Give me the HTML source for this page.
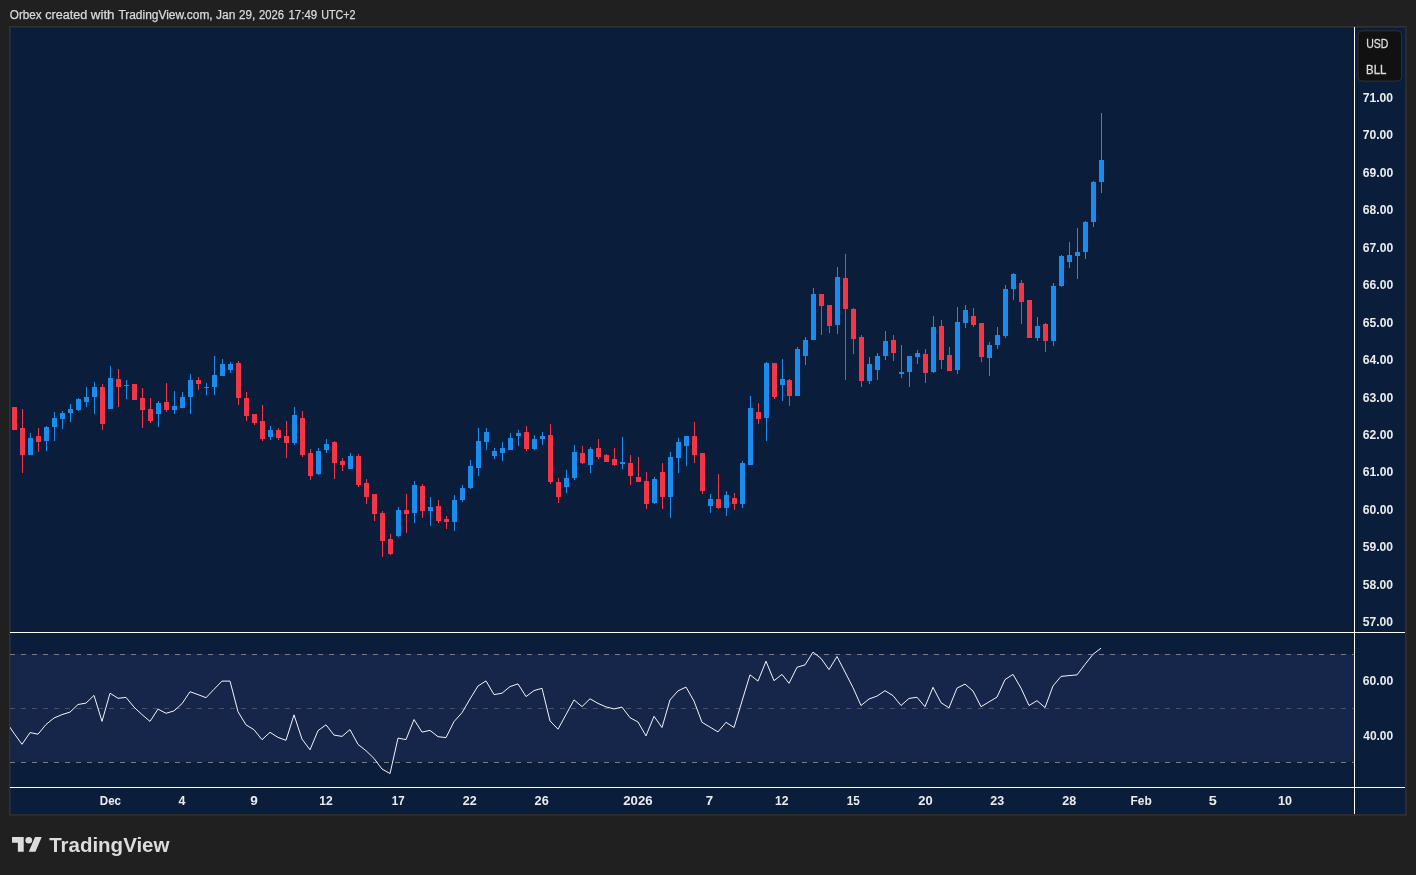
<!DOCTYPE html>
<html lang="en"><head><meta charset="utf-8"><title>BLL chart</title>
<style>html,body{margin:0;padding:0;background:#202020;overflow:hidden}svg{display:block;will-change:transform}text{font-family:"Liberation Sans",sans-serif}.hd{font-size:12px;fill:#dadada;stroke:#dadada;stroke-width:0.25px}.ax{font-size:12px;font-weight:bold;fill:#ececec}.cur{font-size:12px;fill:#dcdcdc;stroke:#dcdcdc;stroke-width:0.3px}.logo{font-size:20.5px;font-weight:bold;fill:#dcdcdc}</style></head><body>
<svg width="1416" height="875" viewBox="0 0 1416 875">
<rect width="1416" height="875" fill="#202020"/>
<rect x="9" y="26" width="1398" height="790" fill="#2c2c2c"/><rect x="9" y="26" width="1396" height="1" fill="#323232"/><rect x="9" y="26" width="1" height="788" fill="#323232"/>
<rect x="10" y="27" width="1395" height="787" fill="#0A1E3C"/>
<rect x="10" y="27" width="1395" height="1" fill="#1a2a42"/>
<rect x="10" y="654" width="1344" height="108" fill="#16254A"/>
<rect x="10" y="27" width="1" height="787" fill="#1a2a42"/>
<line x1="10" x2="1354" y1="654.5" y2="654.5" stroke="#787B86" stroke-opacity="1" stroke-width="1" stroke-dasharray="5 6" shape-rendering="crispEdges"/>
<line x1="10" x2="1354" y1="708.5" y2="708.5" stroke="#787B86" stroke-opacity="0.5" stroke-width="1" stroke-dasharray="5 6" shape-rendering="crispEdges"/>
<line x1="10" x2="1354" y1="762.5" y2="762.5" stroke="#787B86" stroke-opacity="1" stroke-width="1" stroke-dasharray="5 6" shape-rendering="crispEdges"/>
<defs><linearGradient id="gr" gradientUnits="userSpaceOnUse" x1="0" y1="762.5" x2="0" y2="787"><stop offset="0" stop-color="#ff3346" stop-opacity="0"/><stop offset="1" stop-color="#ff3346" stop-opacity="0.18"/></linearGradient><linearGradient id="gg" gradientUnits="userSpaceOnUse" x1="0" y1="654.5" x2="0" y2="633"><stop offset="0" stop-color="#4caf50" stop-opacity="0"/><stop offset="1" stop-color="#4caf50" stop-opacity="0.12"/></linearGradient><clipPath id="cl"><rect x="10" y="762.5" width="1344" height="24.5"/></clipPath><clipPath id="ch"><rect x="10" y="633" width="1344" height="21.5"/></clipPath></defs>
<path clip-path="url(#cl)" fill="url(#gr)" d="M6,762.5 L6,721.5 L14,733.3 L22,744.3 L30,732.6 L38,734.2 L46,724.5 L54,718 L62,714.6 L70,712.1 L78,704.5 L86,703.1 L94,695.4 L102,721.4 L110,693.2 L118,698.3 L126,697.4 L134,707.1 L142,714.6 L150,721.4 L158,709.1 L166,713.3 L174,710.9 L182,703.7 L190,691.7 L198,694.6 L206,697.7 L214,689.3 L222,681.1 L230,681.1 L238,711.7 L246,724.9 L254,729.7 L262,739.7 L270,732.3 L278,737.4 L286,740.3 L294,714.9 L302,739.1 L310,749.8 L318,730.7 L326,724.8 L334,735.1 L342,736.4 L350,729.6 L358,744.4 L366,750.7 L374,758.4 L382,769 L390,773.6 L398,738.1 L406,739.6 L414,719.5 L422,732.1 L430,730.4 L438,736.7 L446,737.6 L454,721.6 L462,712.7 L470,699 L478,686 L486,680.9 L494,694.6 L502,693.2 L510,686.6 L518,683.9 L526,696.6 L534,690.6 L542,688.3 L550,720.9 L558,729.2 L566,714.6 L574,699.9 L582,706.6 L590,698.8 L598,703.4 L606,706.9 L614,708.9 L622,707.1 L630,717.7 L638,722 L646,735.9 L654,716.3 L662,727.5 L670,699.9 L678,690.9 L686,687.1 L694,701.1 L702,722.3 L710,727.1 L718,731.9 L726,722.3 L734,727.5 L742,701.1 L750,674.8 L758,681.1 L766,661.2 L774,680.7 L782,674.4 L789,683.3 L797,667.3 L805,664.9 L813,652.1 L821,658.4 L829,669.6 L837,656.5 L845,672 L853,687.6 L861,705.5 L869,699 L877,696.1 L885,690.7 L893,695.6 L901,705.5 L909,698.4 L917,697.3 L925,706.7 L933,687.3 L941,702.7 L949,707.8 L957,688.1 L965,684.1 L973,691 L981,706.7 L989,701.9 L997,697.1 L1005,679.6 L1013,674.4 L1021,688.1 L1029,705.5 L1037,700.7 L1045,707.6 L1053,685.9 L1061,676.4 L1069,675.6 L1077,674.9 L1085,664.4 L1093,654.3 L1101,648.2 L1101,762.5 Z"/>
<path clip-path="url(#ch)" fill="url(#gg)" d="M6,654.5 L6,721.5 L14,733.3 L22,744.3 L30,732.6 L38,734.2 L46,724.5 L54,718 L62,714.6 L70,712.1 L78,704.5 L86,703.1 L94,695.4 L102,721.4 L110,693.2 L118,698.3 L126,697.4 L134,707.1 L142,714.6 L150,721.4 L158,709.1 L166,713.3 L174,710.9 L182,703.7 L190,691.7 L198,694.6 L206,697.7 L214,689.3 L222,681.1 L230,681.1 L238,711.7 L246,724.9 L254,729.7 L262,739.7 L270,732.3 L278,737.4 L286,740.3 L294,714.9 L302,739.1 L310,749.8 L318,730.7 L326,724.8 L334,735.1 L342,736.4 L350,729.6 L358,744.4 L366,750.7 L374,758.4 L382,769 L390,773.6 L398,738.1 L406,739.6 L414,719.5 L422,732.1 L430,730.4 L438,736.7 L446,737.6 L454,721.6 L462,712.7 L470,699 L478,686 L486,680.9 L494,694.6 L502,693.2 L510,686.6 L518,683.9 L526,696.6 L534,690.6 L542,688.3 L550,720.9 L558,729.2 L566,714.6 L574,699.9 L582,706.6 L590,698.8 L598,703.4 L606,706.9 L614,708.9 L622,707.1 L630,717.7 L638,722 L646,735.9 L654,716.3 L662,727.5 L670,699.9 L678,690.9 L686,687.1 L694,701.1 L702,722.3 L710,727.1 L718,731.9 L726,722.3 L734,727.5 L742,701.1 L750,674.8 L758,681.1 L766,661.2 L774,680.7 L782,674.4 L789,683.3 L797,667.3 L805,664.9 L813,652.1 L821,658.4 L829,669.6 L837,656.5 L845,672 L853,687.6 L861,705.5 L869,699 L877,696.1 L885,690.7 L893,695.6 L901,705.5 L909,698.4 L917,697.3 L925,706.7 L933,687.3 L941,702.7 L949,707.8 L957,688.1 L965,684.1 L973,691 L981,706.7 L989,701.9 L997,697.1 L1005,679.6 L1013,674.4 L1021,688.1 L1029,705.5 L1037,700.7 L1045,707.6 L1053,685.9 L1061,676.4 L1069,675.6 L1077,674.9 L1085,664.4 L1093,654.3 L1101,648.2 L1101,654.5 Z"/>
<clipPath id="c"><rect x="10" y="633" width="1344" height="154"/></clipPath>
<polyline clip-path="url(#c)" fill="none" stroke="#ffffff" stroke-width="0.95" stroke-linejoin="round" points="6.0,721.5 14.0,733.3 22.0,744.3 30.0,732.6 38.0,734.2 46.0,724.5 54.0,718 62.0,714.6 70.0,712.1 78.0,704.5 86.0,703.1 94.0,695.4 102.0,721.4 110.0,693.2 118.0,698.3 126.0,697.4 134.0,707.1 142.0,714.6 150.0,721.4 158.0,709.1 166.0,713.3 174.0,710.9 182.0,703.7 190.0,691.7 198.0,694.6 206.0,697.7 214.0,689.3 222.0,681.1 230.0,681.1 238.0,711.7 246.0,724.9 254.0,729.7 262.0,739.7 270.0,732.3 278.0,737.4 286.0,740.3 294.0,714.9 302.0,739.1 310.0,749.8 318.0,730.7 326.0,724.8 334.0,735.1 342.0,736.4 350.0,729.6 358.0,744.4 366.0,750.7 374.0,758.4 382.0,769 390.0,773.6 398.0,738.1 406.0,739.6 414.0,719.5 422.0,732.1 430.0,730.4 438.0,736.7 446.0,737.6 454.0,721.6 462.0,712.7 470.0,699 478.0,686 486.0,680.9 494.0,694.6 502.0,693.2 510.0,686.6 518.0,683.9 526.0,696.6 534.0,690.6 542.0,688.3 550.0,720.9 558.0,729.2 566.0,714.6 574.0,699.9 582.0,706.6 590.0,698.8 598.0,703.4 606.0,706.9 614.0,708.9 622.0,707.1 630.0,717.7 638.0,722 646.0,735.9 654.0,716.3 662.0,727.5 670.0,699.9 678.0,690.9 686.0,687.1 694.0,701.1 702.0,722.3 710.0,727.1 718.0,731.9 726.0,722.3 734.0,727.5 742.0,701.1 750.0,674.8 758.0,681.1 766.0,661.2 774.0,680.7 782.0,674.4 789.0,683.3 797.0,667.3 805.0,664.9 813.0,652.1 821.0,658.4 829.0,669.6 837.0,656.5 845.0,672 853.0,687.6 861.0,705.5 869.0,699 877.0,696.1 885.0,690.7 893.0,695.6 901.0,705.5 909.0,698.4 917.0,697.3 925.0,706.7 933.0,687.3 941.0,702.7 949.0,707.8 957.0,688.1 965.0,684.1 973.0,691 981.0,706.7 989.0,701.9 997.0,697.1 1005.0,679.6 1013.0,674.4 1021.0,688.1 1029.0,705.5 1037.0,700.7 1045.0,707.6 1053.0,685.9 1061.0,676.4 1069.0,675.6 1077.0,674.9 1085.0,664.4 1093.0,654.3 1101.0,648.2"/>
<g shape-rendering="crispEdges">
<rect x="12" y="407" width="5" height="23" fill="#F23645"/>
<rect x="22" y="409" width="1" height="64" fill="#F23645"/>
<rect x="20" y="428" width="5" height="27" fill="#F23645"/>
<rect x="30" y="433" width="1" height="22" fill="#1B8CEC"/>
<rect x="28" y="438" width="5" height="17" fill="#1B8CEC"/>
<rect x="38" y="428" width="1" height="24" fill="#F23645"/>
<rect x="36" y="436" width="5" height="6" fill="#F23645"/>
<rect x="46" y="426" width="1" height="25" fill="#1B8CEC"/>
<rect x="44" y="427" width="5" height="14" fill="#1B8CEC"/>
<rect x="54" y="412" width="1" height="29" fill="#1B8CEC"/>
<rect x="52" y="418" width="5" height="9" fill="#1B8CEC"/>
<rect x="62" y="411" width="1" height="18" fill="#1B8CEC"/>
<rect x="60" y="413" width="5" height="6" fill="#1B8CEC"/>
<rect x="70" y="404" width="1" height="18" fill="#1B8CEC"/>
<rect x="68" y="409" width="5" height="4" fill="#1B8CEC"/>
<rect x="78" y="398" width="1" height="13" fill="#1B8CEC"/>
<rect x="76" y="399" width="5" height="11" fill="#1B8CEC"/>
<rect x="86" y="387" width="1" height="20" fill="#1B8CEC"/>
<rect x="84" y="397" width="5" height="5" fill="#1B8CEC"/>
<rect x="94" y="382" width="1" height="32" fill="#1B8CEC"/>
<rect x="92" y="387" width="5" height="10" fill="#1B8CEC"/>
<rect x="102" y="384" width="1" height="46" fill="#F23645"/>
<rect x="100" y="387" width="5" height="37" fill="#F23645"/>
<rect x="110" y="366" width="1" height="43" fill="#1B8CEC"/>
<rect x="108" y="378" width="5" height="31" fill="#1B8CEC"/>
<rect x="118" y="369" width="1" height="38" fill="#F23645"/>
<rect x="116" y="379" width="5" height="8" fill="#F23645"/>
<rect x="126" y="380" width="1" height="19" fill="#1B8CEC"/>
<rect x="124" y="385" width="5" height="1" fill="#1B8CEC"/>
<rect x="132" y="384" width="5" height="16" fill="#F23645"/>
<rect x="142" y="388" width="1" height="40" fill="#F23645"/>
<rect x="140" y="398" width="5" height="12" fill="#F23645"/>
<rect x="150" y="398" width="1" height="25" fill="#F23645"/>
<rect x="148" y="409" width="5" height="12" fill="#F23645"/>
<rect x="158" y="401" width="1" height="26" fill="#1B8CEC"/>
<rect x="156" y="403" width="5" height="11" fill="#1B8CEC"/>
<rect x="166" y="383" width="1" height="29" fill="#F23645"/>
<rect x="164" y="402" width="5" height="8" fill="#F23645"/>
<rect x="174" y="391" width="1" height="23" fill="#1B8CEC"/>
<rect x="172" y="406" width="5" height="4" fill="#1B8CEC"/>
<rect x="182" y="392" width="1" height="16" fill="#1B8CEC"/>
<rect x="180" y="397" width="5" height="11" fill="#1B8CEC"/>
<rect x="190" y="374" width="1" height="40" fill="#1B8CEC"/>
<rect x="188" y="380" width="5" height="17" fill="#1B8CEC"/>
<rect x="198" y="377" width="1" height="13" fill="#F23645"/>
<rect x="196" y="380" width="5" height="4" fill="#F23645"/>
<rect x="206" y="383" width="1" height="12" fill="#1B8CEC"/>
<rect x="204" y="387" width="5" height="1" fill="#1B8CEC"/>
<rect x="214" y="356" width="1" height="39" fill="#1B8CEC"/>
<rect x="212" y="375" width="5" height="12" fill="#1B8CEC"/>
<rect x="222" y="359" width="1" height="17" fill="#1B8CEC"/>
<rect x="220" y="364" width="5" height="12" fill="#1B8CEC"/>
<rect x="230" y="362" width="1" height="11" fill="#1B8CEC"/>
<rect x="228" y="364" width="5" height="6" fill="#1B8CEC"/>
<rect x="238" y="361" width="1" height="44" fill="#F23645"/>
<rect x="236" y="363" width="5" height="35" fill="#F23645"/>
<rect x="246" y="392" width="1" height="29" fill="#F23645"/>
<rect x="244" y="398" width="5" height="18" fill="#F23645"/>
<rect x="254" y="414" width="1" height="11" fill="#F23645"/>
<rect x="252" y="414" width="5" height="9" fill="#F23645"/>
<rect x="262" y="405" width="1" height="36" fill="#F23645"/>
<rect x="260" y="421" width="5" height="18" fill="#F23645"/>
<rect x="270" y="426" width="1" height="14" fill="#1B8CEC"/>
<rect x="268" y="430" width="5" height="7" fill="#1B8CEC"/>
<rect x="278" y="428" width="1" height="12" fill="#F23645"/>
<rect x="276" y="430" width="5" height="8" fill="#F23645"/>
<rect x="286" y="421" width="1" height="37" fill="#F23645"/>
<rect x="284" y="436" width="5" height="7" fill="#F23645"/>
<rect x="294" y="407" width="1" height="38" fill="#1B8CEC"/>
<rect x="292" y="415" width="5" height="28" fill="#1B8CEC"/>
<rect x="302" y="411" width="1" height="46" fill="#F23645"/>
<rect x="300" y="418" width="5" height="37" fill="#F23645"/>
<rect x="310" y="449" width="1" height="31" fill="#F23645"/>
<rect x="308" y="453" width="5" height="23" fill="#F23645"/>
<rect x="318" y="448" width="1" height="27" fill="#1B8CEC"/>
<rect x="316" y="451" width="5" height="23" fill="#1B8CEC"/>
<rect x="326" y="439" width="1" height="14" fill="#1B8CEC"/>
<rect x="324" y="444" width="5" height="6" fill="#1B8CEC"/>
<rect x="334" y="441" width="1" height="38" fill="#F23645"/>
<rect x="332" y="442" width="5" height="21" fill="#F23645"/>
<rect x="342" y="458" width="1" height="13" fill="#F23645"/>
<rect x="340" y="461" width="5" height="4" fill="#F23645"/>
<rect x="350" y="453" width="1" height="16" fill="#1B8CEC"/>
<rect x="348" y="456" width="5" height="13" fill="#1B8CEC"/>
<rect x="358" y="454" width="1" height="33" fill="#F23645"/>
<rect x="356" y="456" width="5" height="29" fill="#F23645"/>
<rect x="366" y="479" width="1" height="25" fill="#F23645"/>
<rect x="364" y="483" width="5" height="14" fill="#F23645"/>
<rect x="374" y="494" width="1" height="27" fill="#F23645"/>
<rect x="372" y="494" width="5" height="20" fill="#F23645"/>
<rect x="382" y="511" width="1" height="46" fill="#F23645"/>
<rect x="380" y="513" width="5" height="28" fill="#F23645"/>
<rect x="390" y="534" width="1" height="21" fill="#F23645"/>
<rect x="388" y="539" width="5" height="15" fill="#F23645"/>
<rect x="398" y="507" width="1" height="30" fill="#1B8CEC"/>
<rect x="396" y="510" width="5" height="26" fill="#1B8CEC"/>
<rect x="406" y="494" width="1" height="39" fill="#F23645"/>
<rect x="404" y="510" width="5" height="4" fill="#F23645"/>
<rect x="414" y="481" width="1" height="42" fill="#1B8CEC"/>
<rect x="412" y="485" width="5" height="28" fill="#1B8CEC"/>
<rect x="422" y="484" width="1" height="34" fill="#F23645"/>
<rect x="420" y="486" width="5" height="25" fill="#F23645"/>
<rect x="430" y="497" width="1" height="29" fill="#1B8CEC"/>
<rect x="428" y="507" width="5" height="4" fill="#1B8CEC"/>
<rect x="438" y="500" width="1" height="23" fill="#F23645"/>
<rect x="436" y="506" width="5" height="15" fill="#F23645"/>
<rect x="446" y="516" width="1" height="13" fill="#F23645"/>
<rect x="444" y="519" width="5" height="3" fill="#F23645"/>
<rect x="454" y="495" width="1" height="36" fill="#1B8CEC"/>
<rect x="452" y="500" width="5" height="22" fill="#1B8CEC"/>
<rect x="462" y="485" width="1" height="17" fill="#1B8CEC"/>
<rect x="460" y="488" width="5" height="12" fill="#1B8CEC"/>
<rect x="470" y="460" width="1" height="29" fill="#1B8CEC"/>
<rect x="468" y="466" width="5" height="22" fill="#1B8CEC"/>
<rect x="478" y="428" width="1" height="48" fill="#1B8CEC"/>
<rect x="476" y="441" width="5" height="27" fill="#1B8CEC"/>
<rect x="486" y="428" width="1" height="22" fill="#1B8CEC"/>
<rect x="484" y="432" width="5" height="10" fill="#1B8CEC"/>
<rect x="494" y="448" width="1" height="11" fill="#1B8CEC"/>
<rect x="492" y="451" width="5" height="5" fill="#1B8CEC"/>
<rect x="502" y="442" width="1" height="19" fill="#1B8CEC"/>
<rect x="500" y="448" width="5" height="5" fill="#1B8CEC"/>
<rect x="510" y="433" width="1" height="17" fill="#1B8CEC"/>
<rect x="508" y="438" width="5" height="12" fill="#1B8CEC"/>
<rect x="518" y="430" width="1" height="16" fill="#1B8CEC"/>
<rect x="516" y="433" width="5" height="3" fill="#1B8CEC"/>
<rect x="526" y="426" width="1" height="25" fill="#F23645"/>
<rect x="524" y="432" width="5" height="17" fill="#F23645"/>
<rect x="534" y="435" width="1" height="15" fill="#1B8CEC"/>
<rect x="532" y="439" width="5" height="10" fill="#1B8CEC"/>
<rect x="542" y="432" width="1" height="13" fill="#1B8CEC"/>
<rect x="540" y="436" width="5" height="3" fill="#1B8CEC"/>
<rect x="550" y="424" width="1" height="60" fill="#F23645"/>
<rect x="548" y="435" width="5" height="47" fill="#F23645"/>
<rect x="558" y="478" width="1" height="25" fill="#F23645"/>
<rect x="556" y="482" width="5" height="15" fill="#F23645"/>
<rect x="566" y="470" width="1" height="23" fill="#1B8CEC"/>
<rect x="564" y="478" width="5" height="9" fill="#1B8CEC"/>
<rect x="574" y="445" width="1" height="35" fill="#1B8CEC"/>
<rect x="572" y="452" width="5" height="26" fill="#1B8CEC"/>
<rect x="582" y="446" width="1" height="18" fill="#F23645"/>
<rect x="580" y="453" width="5" height="10" fill="#F23645"/>
<rect x="590" y="447" width="1" height="26" fill="#1B8CEC"/>
<rect x="588" y="449" width="5" height="16" fill="#1B8CEC"/>
<rect x="598" y="439" width="1" height="20" fill="#F23645"/>
<rect x="596" y="448" width="5" height="9" fill="#F23645"/>
<rect x="606" y="454" width="1" height="8" fill="#F23645"/>
<rect x="604" y="455" width="5" height="7" fill="#F23645"/>
<rect x="614" y="448" width="1" height="18" fill="#F23645"/>
<rect x="612" y="459" width="5" height="6" fill="#F23645"/>
<rect x="622" y="437" width="1" height="32" fill="#1B8CEC"/>
<rect x="620" y="462" width="5" height="2" fill="#1B8CEC"/>
<rect x="630" y="455" width="1" height="30" fill="#F23645"/>
<rect x="628" y="463" width="5" height="13" fill="#F23645"/>
<rect x="638" y="457" width="1" height="25" fill="#F23645"/>
<rect x="636" y="477" width="5" height="5" fill="#F23645"/>
<rect x="646" y="472" width="1" height="37" fill="#F23645"/>
<rect x="644" y="481" width="5" height="23" fill="#F23645"/>
<rect x="654" y="477" width="1" height="27" fill="#1B8CEC"/>
<rect x="652" y="479" width="5" height="24" fill="#1B8CEC"/>
<rect x="662" y="463" width="1" height="46" fill="#F23645"/>
<rect x="660" y="472" width="5" height="25" fill="#F23645"/>
<rect x="670" y="452" width="1" height="66" fill="#1B8CEC"/>
<rect x="668" y="457" width="5" height="40" fill="#1B8CEC"/>
<rect x="678" y="438" width="1" height="35" fill="#1B8CEC"/>
<rect x="676" y="442" width="5" height="16" fill="#1B8CEC"/>
<rect x="686" y="436" width="1" height="30" fill="#1B8CEC"/>
<rect x="684" y="436" width="5" height="10" fill="#1B8CEC"/>
<rect x="694" y="422" width="1" height="41" fill="#F23645"/>
<rect x="692" y="436" width="5" height="19" fill="#F23645"/>
<rect x="702" y="453" width="1" height="41" fill="#F23645"/>
<rect x="700" y="453" width="5" height="38" fill="#F23645"/>
<rect x="710" y="494" width="1" height="19" fill="#1B8CEC"/>
<rect x="708" y="499" width="5" height="7" fill="#1B8CEC"/>
<rect x="718" y="474" width="1" height="35" fill="#F23645"/>
<rect x="716" y="499" width="5" height="9" fill="#F23645"/>
<rect x="726" y="491" width="1" height="25" fill="#1B8CEC"/>
<rect x="724" y="495" width="5" height="13" fill="#1B8CEC"/>
<rect x="734" y="493" width="1" height="17" fill="#F23645"/>
<rect x="732" y="498" width="5" height="6" fill="#F23645"/>
<rect x="742" y="461" width="1" height="47" fill="#1B8CEC"/>
<rect x="740" y="463" width="5" height="41" fill="#1B8CEC"/>
<rect x="750" y="396" width="1" height="69" fill="#1B8CEC"/>
<rect x="748" y="408" width="5" height="57" fill="#1B8CEC"/>
<rect x="758" y="403" width="1" height="21" fill="#F23645"/>
<rect x="756" y="412" width="5" height="7" fill="#F23645"/>
<rect x="766" y="362" width="1" height="79" fill="#1B8CEC"/>
<rect x="764" y="363" width="5" height="55" fill="#1B8CEC"/>
<rect x="774" y="363" width="1" height="36" fill="#F23645"/>
<rect x="772" y="363" width="5" height="34" fill="#F23645"/>
<rect x="782" y="359" width="1" height="42" fill="#1B8CEC"/>
<rect x="780" y="379" width="5" height="6" fill="#1B8CEC"/>
<rect x="789" y="379" width="1" height="27" fill="#F23645"/>
<rect x="787" y="380" width="5" height="16" fill="#F23645"/>
<rect x="797" y="347" width="1" height="49" fill="#1B8CEC"/>
<rect x="795" y="349" width="5" height="47" fill="#1B8CEC"/>
<rect x="805" y="337" width="1" height="28" fill="#1B8CEC"/>
<rect x="803" y="340" width="5" height="16" fill="#1B8CEC"/>
<rect x="813" y="288" width="1" height="52" fill="#1B8CEC"/>
<rect x="811" y="294" width="5" height="46" fill="#1B8CEC"/>
<rect x="821" y="294" width="1" height="41" fill="#F23645"/>
<rect x="819" y="294" width="5" height="12" fill="#F23645"/>
<rect x="829" y="305" width="1" height="28" fill="#F23645"/>
<rect x="827" y="305" width="5" height="21" fill="#F23645"/>
<rect x="837" y="267" width="1" height="67" fill="#1B8CEC"/>
<rect x="835" y="277" width="5" height="48" fill="#1B8CEC"/>
<rect x="845" y="254" width="1" height="126" fill="#F23645"/>
<rect x="843" y="278" width="5" height="31" fill="#F23645"/>
<rect x="853" y="308" width="1" height="46" fill="#F23645"/>
<rect x="851" y="309" width="5" height="30" fill="#F23645"/>
<rect x="861" y="335" width="1" height="52" fill="#F23645"/>
<rect x="859" y="337" width="5" height="44" fill="#F23645"/>
<rect x="869" y="357" width="1" height="27" fill="#1B8CEC"/>
<rect x="867" y="364" width="5" height="17" fill="#1B8CEC"/>
<rect x="877" y="353" width="1" height="27" fill="#1B8CEC"/>
<rect x="875" y="356" width="5" height="14" fill="#1B8CEC"/>
<rect x="885" y="331" width="1" height="29" fill="#1B8CEC"/>
<rect x="883" y="341" width="5" height="15" fill="#1B8CEC"/>
<rect x="893" y="335" width="1" height="26" fill="#F23645"/>
<rect x="891" y="340" width="5" height="13" fill="#F23645"/>
<rect x="901" y="345" width="1" height="33" fill="#1B8CEC"/>
<rect x="899" y="372" width="5" height="2" fill="#1B8CEC"/>
<rect x="909" y="356" width="1" height="31" fill="#1B8CEC"/>
<rect x="907" y="356" width="5" height="16" fill="#1B8CEC"/>
<rect x="917" y="350" width="1" height="14" fill="#1B8CEC"/>
<rect x="915" y="353" width="5" height="4" fill="#1B8CEC"/>
<rect x="925" y="349" width="1" height="34" fill="#F23645"/>
<rect x="923" y="354" width="5" height="19" fill="#F23645"/>
<rect x="933" y="316" width="1" height="57" fill="#1B8CEC"/>
<rect x="931" y="327" width="5" height="45" fill="#1B8CEC"/>
<rect x="941" y="320" width="1" height="49" fill="#F23645"/>
<rect x="939" y="326" width="5" height="34" fill="#F23645"/>
<rect x="949" y="347" width="1" height="24" fill="#F23645"/>
<rect x="947" y="355" width="5" height="16" fill="#F23645"/>
<rect x="957" y="307" width="1" height="67" fill="#1B8CEC"/>
<rect x="955" y="322" width="5" height="48" fill="#1B8CEC"/>
<rect x="965" y="305" width="1" height="23" fill="#1B8CEC"/>
<rect x="963" y="310" width="5" height="13" fill="#1B8CEC"/>
<rect x="973" y="308" width="1" height="19" fill="#F23645"/>
<rect x="971" y="316" width="5" height="9" fill="#F23645"/>
<rect x="981" y="323" width="1" height="39" fill="#F23645"/>
<rect x="979" y="323" width="5" height="34" fill="#F23645"/>
<rect x="989" y="342" width="1" height="34" fill="#1B8CEC"/>
<rect x="987" y="345" width="5" height="13" fill="#1B8CEC"/>
<rect x="997" y="327" width="1" height="22" fill="#1B8CEC"/>
<rect x="995" y="335" width="5" height="10" fill="#1B8CEC"/>
<rect x="1005" y="285" width="1" height="53" fill="#1B8CEC"/>
<rect x="1003" y="289" width="5" height="47" fill="#1B8CEC"/>
<rect x="1013" y="273" width="1" height="27" fill="#1B8CEC"/>
<rect x="1011" y="274" width="5" height="15" fill="#1B8CEC"/>
<rect x="1021" y="280" width="1" height="44" fill="#F23645"/>
<rect x="1019" y="283" width="5" height="19" fill="#F23645"/>
<rect x="1027" y="300" width="5" height="38" fill="#F23645"/>
<rect x="1037" y="317" width="1" height="24" fill="#1B8CEC"/>
<rect x="1035" y="326" width="5" height="12" fill="#1B8CEC"/>
<rect x="1045" y="323" width="1" height="29" fill="#F23645"/>
<rect x="1043" y="324" width="5" height="17" fill="#F23645"/>
<rect x="1053" y="283" width="1" height="63" fill="#1B8CEC"/>
<rect x="1051" y="286" width="5" height="55" fill="#1B8CEC"/>
<rect x="1061" y="255" width="1" height="32" fill="#1B8CEC"/>
<rect x="1059" y="256" width="5" height="30" fill="#1B8CEC"/>
<rect x="1069" y="242" width="1" height="26" fill="#1B8CEC"/>
<rect x="1067" y="255" width="5" height="7" fill="#1B8CEC"/>
<rect x="1077" y="228" width="1" height="51" fill="#1B8CEC"/>
<rect x="1075" y="252" width="5" height="4" fill="#1B8CEC"/>
<rect x="1085" y="221" width="1" height="38" fill="#1B8CEC"/>
<rect x="1083" y="222" width="5" height="30" fill="#1B8CEC"/>
<rect x="1093" y="181" width="1" height="46" fill="#1B8CEC"/>
<rect x="1091" y="182" width="5" height="40" fill="#1B8CEC"/>
<rect x="1101" y="113" width="1" height="80" fill="#1B8CEC"/>
<rect x="1099" y="160" width="5" height="22" fill="#1B8CEC"/>
</g>
<g shape-rendering="crispEdges" fill="#ffffff">
<rect x="10" y="632" width="1395" height="1"/>
<rect x="10" y="787" width="1395" height="1"/>
<rect x="1354" y="27" width="1" height="787"/>
</g>
<rect x="1358" y="30.8" width="43.7" height="50.3" rx="4" fill="#111111" stroke="#2f3237" stroke-width="1"/>
<text class="hd" x="9.82" y="18.7" textLength="31.75" lengthAdjust="spacingAndGlyphs">Orbex</text>
<text class="hd" x="45.21" y="18.7" textLength="41.99" lengthAdjust="spacingAndGlyphs">created</text>
<text class="hd" x="90.77" y="18.7" textLength="23.76" lengthAdjust="spacingAndGlyphs">with</text>
<text class="hd" x="118.42" y="18.7" textLength="94.25" lengthAdjust="spacingAndGlyphs">TradingView.com,</text>
<text class="hd" x="216.04" y="18.7" textLength="19.31" lengthAdjust="spacingAndGlyphs">Jan</text>
<text class="hd" x="239.11" y="18.7" textLength="16.21" lengthAdjust="spacingAndGlyphs">29,</text>
<text class="hd" x="259.05" y="18.7" textLength="24.99" lengthAdjust="spacingAndGlyphs">2026</text>
<text class="hd" x="288.49" y="18.7" textLength="28.71" lengthAdjust="spacingAndGlyphs">17:49</text>
<text class="hd" x="321.23" y="18.7" textLength="34.39" lengthAdjust="spacingAndGlyphs">UTC+2</text>
<text class="cur" x="1366.25" y="47.8" textLength="22.22" lengthAdjust="spacingAndGlyphs">USD</text>
<text class="cur" x="1366.07" y="73.8" textLength="20.39" lengthAdjust="spacingAndGlyphs">BLL</text>
<text class="ax" x="1362.77" y="102.0" textLength="30.34" lengthAdjust="spacingAndGlyphs">71.00</text>
<text class="ax" x="1362.77" y="139.4" textLength="30.34" lengthAdjust="spacingAndGlyphs">70.00</text>
<text class="ax" x="1362.85" y="176.9" textLength="30.38" lengthAdjust="spacingAndGlyphs">69.00</text>
<text class="ax" x="1362.85" y="214.3" textLength="30.38" lengthAdjust="spacingAndGlyphs">68.00</text>
<text class="ax" x="1362.85" y="251.8" textLength="30.38" lengthAdjust="spacingAndGlyphs">67.00</text>
<text class="ax" x="1362.85" y="289.2" textLength="30.38" lengthAdjust="spacingAndGlyphs">66.00</text>
<text class="ax" x="1362.85" y="326.6" textLength="30.38" lengthAdjust="spacingAndGlyphs">65.00</text>
<text class="ax" x="1362.85" y="364.1" textLength="30.38" lengthAdjust="spacingAndGlyphs">64.00</text>
<text class="ax" x="1362.85" y="401.5" textLength="30.38" lengthAdjust="spacingAndGlyphs">63.00</text>
<text class="ax" x="1362.85" y="439.0" textLength="30.38" lengthAdjust="spacingAndGlyphs">62.00</text>
<text class="ax" x="1362.85" y="476.4" textLength="30.38" lengthAdjust="spacingAndGlyphs">61.00</text>
<text class="ax" x="1362.85" y="513.8" textLength="30.38" lengthAdjust="spacingAndGlyphs">60.00</text>
<text class="ax" x="1362.78" y="551.3" textLength="30.29" lengthAdjust="spacingAndGlyphs">59.00</text>
<text class="ax" x="1362.78" y="588.7" textLength="30.29" lengthAdjust="spacingAndGlyphs">58.00</text>
<text class="ax" x="1362.78" y="626.2" textLength="30.29" lengthAdjust="spacingAndGlyphs">57.00</text>
<text class="ax" x="1362.85" y="685.2" textLength="30.38" lengthAdjust="spacingAndGlyphs">60.00</text>
<text class="ax" x="1363.26" y="739.8" textLength="29.90" lengthAdjust="spacingAndGlyphs">40.00</text>
<text class="ax" x="99.80" y="805.4" textLength="21.20" lengthAdjust="spacingAndGlyphs">Dec</text>
<text class="ax" x="178.54" y="805.4" textLength="6.91" lengthAdjust="spacingAndGlyphs">4</text>
<text class="ax" x="250.18" y="805.4" textLength="7.54" lengthAdjust="spacingAndGlyphs">9</text>
<text class="ax" x="319.21" y="805.4" textLength="13.41" lengthAdjust="spacingAndGlyphs">12</text>
<text class="ax" x="391.81" y="805.4" textLength="12.81" lengthAdjust="spacingAndGlyphs">17</text>
<text class="ax" x="462.77" y="805.4" textLength="13.91" lengthAdjust="spacingAndGlyphs">22</text>
<text class="ax" x="534.60" y="805.4" textLength="14.14" lengthAdjust="spacingAndGlyphs">26</text>
<text class="ax" x="623.27" y="805.4" textLength="29.41" lengthAdjust="spacingAndGlyphs">2026</text>
<text class="ax" x="705.79" y="805.4" textLength="7.39" lengthAdjust="spacingAndGlyphs">7</text>
<text class="ax" x="775.04" y="805.4" textLength="13.57" lengthAdjust="spacingAndGlyphs">12</text>
<text class="ax" x="846.80" y="805.4" textLength="13.10" lengthAdjust="spacingAndGlyphs">15</text>
<text class="ax" x="918.24" y="805.4" textLength="14.39" lengthAdjust="spacingAndGlyphs">20</text>
<text class="ax" x="990.36" y="805.4" textLength="13.91" lengthAdjust="spacingAndGlyphs">23</text>
<text class="ax" x="1062.24" y="805.4" textLength="13.98" lengthAdjust="spacingAndGlyphs">28</text>
<text class="ax" x="1130.55" y="805.4" textLength="21.22" lengthAdjust="spacingAndGlyphs">Feb</text>
<text class="ax" x="1208.75" y="805.4" textLength="8.10" lengthAdjust="spacingAndGlyphs">5</text>
<text class="ax" x="1278.13" y="805.4" textLength="13.94" lengthAdjust="spacingAndGlyphs">10</text>
<text class="logo" x="49.16" y="851.8" textLength="120.29" lengthAdjust="spacingAndGlyphs">TradingView</text>
<g transform="translate(12,833.7) scale(0.837,0.825)" fill="#dcdcdc"><path d="M14 22H7V11H0V4h14v18zM28 22h-8l7.5-18h8L28 22z"/><circle cx="20" cy="8" r="4"/></g>
</svg></body></html>
